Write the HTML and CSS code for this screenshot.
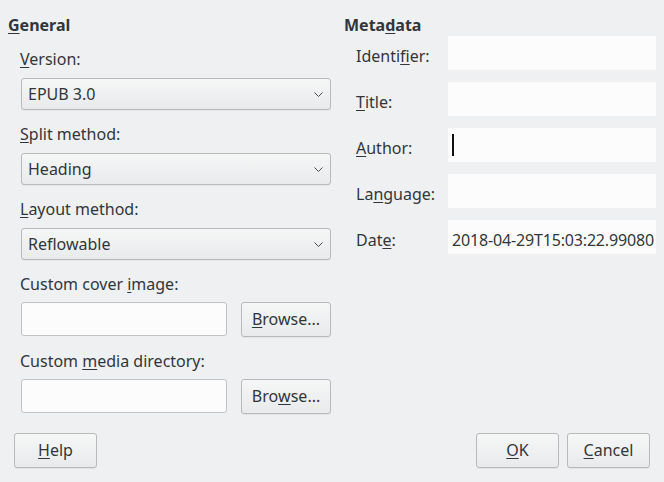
FILE: index.html
```html
<!DOCTYPE html>
<html lang="en">
<head>
<meta charset="utf-8">
<title>EPUB Export</title>
<link rel="stylesheet" href="styles.css">
</head>
<body>
<div class="dialog">
  <div class="columns">
    <section class="general">
      <h2 class="heading"><u>G</u>eneral</h2>
      <div class="group">
        <div class="field">
          <div class="label"><u>V</u>ersion:</div>
          <div class="combo"><span>EPUB 3.0</span><svg class="chev" width="9" height="5" viewBox="0 0 9 5"><path d="M0.5 0.5 L4.5 4.5 L8.5 0.5" fill="none" stroke="#4a4d50" stroke-width="1"/></svg></div>
        </div>
        <div class="field">
          <div class="label"><u>S</u>plit method:</div>
          <div class="combo"><span>Heading</span><svg class="chev" width="9" height="5" viewBox="0 0 9 5"><path d="M0.5 0.5 L4.5 4.5 L8.5 0.5" fill="none" stroke="#4a4d50" stroke-width="1"/></svg></div>
        </div>
        <div class="field">
          <div class="label"><u>L</u>ayout method:</div>
          <div class="combo"><span>Reflowable</span><svg class="chev" width="9" height="5" viewBox="0 0 9 5"><path d="M0.5 0.5 L4.5 4.5 L8.5 0.5" fill="none" stroke="#4a4d50" stroke-width="1"/></svg></div>
        </div>
        <div class="field">
          <div class="label label-input">Custom cover <u>i</u>mage:</div>
          <div class="browse-row"><div class="input"></div><div class="button browse"><u>B</u>rowse...</div></div>
        </div>
        <div class="field">
          <div class="label label-input">Custom <u>m</u>edia directory:</div>
          <div class="browse-row"><div class="input"></div><div class="button browse">Bro<u>w</u>se...</div></div>
        </div>
      </div>
    </section>
    <section class="metadata">
      <h2 class="heading">Meta<u>d</u>ata</h2>
      <div class="meta-grid">
        <div class="meta-label">Identi<u>f</u>ier:</div><div class="meta-field"></div>
        <div class="meta-label"><u>T</u>itle:</div><div class="meta-field"></div>
        <div class="meta-label"><u>A</u>uthor:</div><div class="meta-field"><span class="caret"></span></div>
        <div class="meta-label">La<u>n</u>guage:</div><div class="meta-field"></div>
        <div class="meta-label">Dat<u>e</u>:</div><div class="meta-field"><span class="value">2018-04-29T15:03:22.99080</span></div>
      </div>
    </section>
  </div>
  <div class="buttons">
    <div class="button help"><u>H</u>elp</div>
    <div class="spacer"></div>
    <div class="button ok"><u>O</u>K</div>
    <div class="button cancel"><u>C</u>ancel</div>
  </div>
</div>
</body>
</html>
```
FILE: styles.css
```css
html, body {
  margin: 0;
  padding: 0;
  width: 664px;
  height: 482px;
  overflow: hidden;
  background: #eff0f1;
}
body {
  font-family: "Noto Sans", "DejaVu Sans", sans-serif;
  font-size: 16px;
  color: #31363b;
}
u {
  text-decoration: underline;
  text-decoration-thickness: 1px;
  text-underline-offset: 2px;
}
.dialog {
  padding: 14px 14px 0 8px;
}
.columns {
  display: flex;
  gap: 13px;
}
.general {
  width: 323px;
  flex: none;
}
.metadata {
  width: 312px;
  flex: none;
}
.heading {
  margin: 0;
  font-size: 16px;
  font-weight: bold;
  line-height: 22px;
  height: 22px;
}
.group {
  margin-top: 12px;
  padding-left: 12px;
  display: flex;
  flex-direction: column;
  gap: 13px;
}
.label {
  line-height: 22px;
  height: 22px;
  margin-bottom: 8px;
  white-space: nowrap;
}
.label-input {
  margin-bottom: 7px;
}
.combo {
  margin-left: 1px;
  width: 310px;
  height: 32px;
  box-sizing: border-box;
  border: 1px solid #b7b9bb;
  border-radius: 3px;
  background: linear-gradient(#f5f6f6, #e9eaeb);
  box-shadow: 0 1px 0 rgba(0,0,0,0.04);
  display: flex;
  align-items: center;
  justify-content: space-between;
  padding: 0 7px 0 6px;
  line-height: 22px;
}
.combo span {
  margin-top: -1px;
}
.chev {
  display: block;
}
.browse-row {
  margin-left: 1px;
  display: flex;
  gap: 14px;
  align-items: flex-start;
}
.input {
  width: 206px;
  height: 34px;
  box-sizing: border-box;
  border: 1px solid #bfc1c3;
  border-radius: 3px;
  background: #fcfcfc;
}
.button {
  box-sizing: border-box;
  border: 1px solid #b7b9bb;
  border-radius: 3px;
  background: linear-gradient(#f5f6f6, #e9eaeb);
  box-shadow: 0 1px 0 rgba(0,0,0,0.05);
  display: flex;
  align-items: center;
  justify-content: center;
  line-height: 22px;
  white-space: nowrap;
  padding-bottom: 1px;
}
.browse {
  width: 90px;
  height: 35px;
}
.meta-grid {
  display: grid;
  grid-template-columns: 104px 208px;
  grid-auto-rows: 34px;
  row-gap: 12px;
}
.meta-label {
  padding-left: 12px;
  padding-top: 9px;
  line-height: 22px;
  white-space: nowrap;
}
.meta-field {
  background: #fcfcfc;
  overflow: hidden;
  white-space: nowrap;
  padding-left: 4px;
  padding-top: 9px;
  line-height: 22px;
  box-sizing: border-box;
  position: relative;
}
.value {
  letter-spacing: -0.16px;
}
.caret {
  position: absolute;
  left: 4px;
  top: 6px;
  width: 2px;
  height: 22px;
  background: #111;
}
.buttons {
  margin-top: 19px;
  display: flex;
  gap: 8px;
  padding-left: 6px;
}
.spacer {
  flex: 1;
}
.help, .ok, .cancel {
  width: 83px;
  height: 35px;
}
```
